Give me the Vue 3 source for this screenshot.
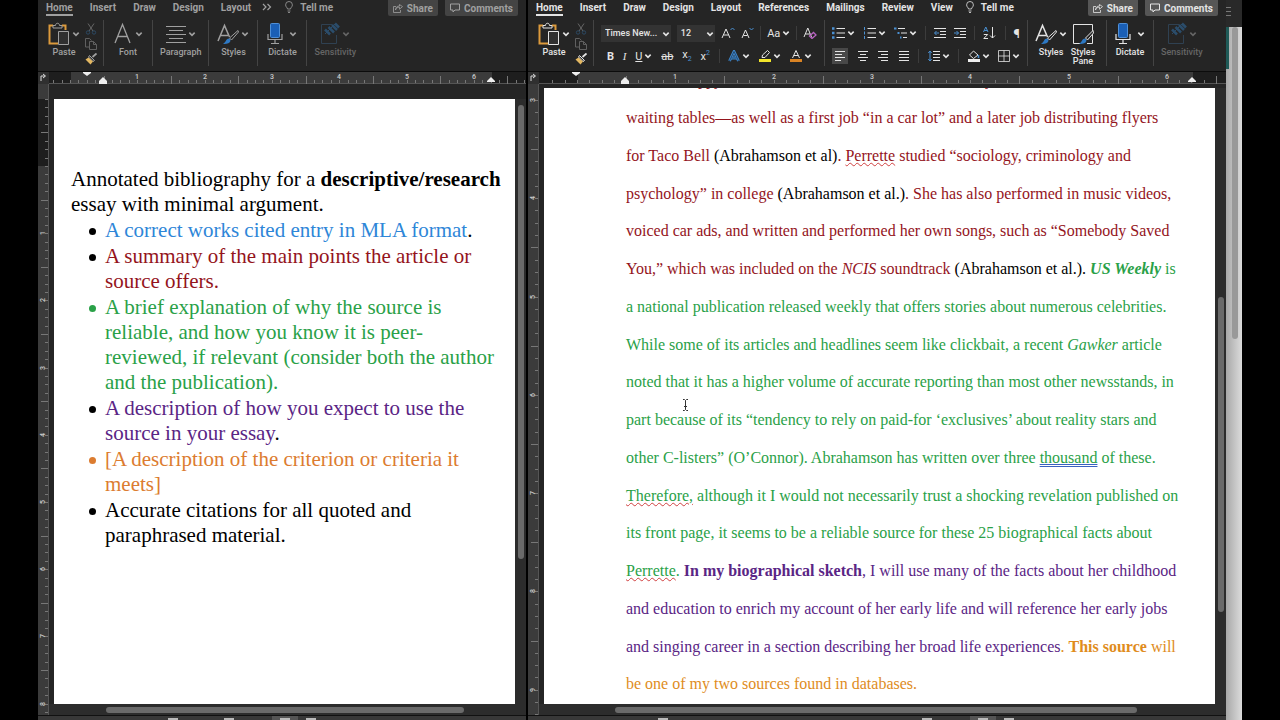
<script setup>
import { ref } from 'vue'

const fontName = ref('Times New...')
const fontSize = ref('12')

const windows = [
  {
    id: 'notes',
    tabs: ['Home', 'Insert', 'Draw', 'Design', 'Layout'],
    more: true,
    ruler: { origin: 32, inch: 67.3, end: 453, first: 49, hang: 65 },
    side: { origin: 82, inch: 67.2, start: 82, margin: 15, count: 9 },
    vbar: { before: 1, size: 75, after: 24 },
    hbar: { before: 12, size: 75, after: 13 }
  },
  {
    id: 'essay',
    tabs: ['Home', 'Insert', 'Draw', 'Design', 'Layout', 'References', 'Mailings', 'Review', 'View'],
    more: false,
    ruler: { origin: 49, inch: 98.3, end: 664, first: 48, hang: 97 },
    side: { origin: -279, inch: 98.3, start: 0, margin: 0, count: 10 },
    vbar: { before: 34, size: 51, after: 15 },
    hbar: { before: 11, size: 76, after: 13 }
  }
]

const intro = [
  [['Annotated bibliography for a ', ''], ['descriptive/research', 'bold']],
  [['essay with minimal argument.', '']]
]

const items = [
  { color: 'blue', dot: 'black', lines: ['A correct works cited entry in MLA format'], stop: '.' },
  { color: 'red', dot: 'black', lines: ['A summary of the main points the article or', 'source offers.'] },
  { color: 'green', dot: 'green', lines: ['A brief explanation of why the source is', 'reliable, and how you know it is peer-', 'reviewed, if relevant (consider both the author', 'and the publication).'] },
  { color: 'purple', dot: 'black', lines: ['A description of how you expect to use the', 'source in your essay'], stop: '.' },
  { color: 'orange', dot: 'orange', lines: ['[A description of the criterion or criteria it', 'meets]'] },
  { color: 'black', dot: 'black', lines: ['Accurate citations for all quoted and', 'paraphrased material.'] }
]

// each line is a list of [text, classes]
const essay = [
  [['work, unhappy as it made her, then landed on other odd jobs, as a clerk, a maid,', 'red']],
  [['waiting tables—as well as a first job “in a car lot” and a later job distributing flyers', 'red']],
  [['for Taco Bell ', 'red'], ['(Abrahamson et al)', 'black'], ['. ', 'red'], ['Perrette', 'red wavy'], [' studied “sociology, criminology and', 'red']],
  [['psychology” in college ', 'red'], ['(Abrahamson et al.)', 'black'], ['. She has also performed in music videos,', 'red']],
  [['voiced car ads, and written and performed her own songs, such as “Somebody Saved', 'red']],
  [['You,” which was included on the ', 'red'], ['NCIS', 'red italic'], [' soundtrack ', 'red'], ['(Abrahamson et al.).', 'black'], [' ', ''], ['US Weekly', 'green bold italic'], [' is', 'green']],
  [['a national publication released weekly that offers stories about numerous celebrities.', 'green']],
  [['While some of its articles and headlines seem like clickbait, a recent ', 'green'], ['Gawker', 'green italic'], [' article', 'green']],
  [['noted that it has a higher volume of accurate reporting than most other newsstands, in', 'green']],
  [['part because of its “tendency to rely on paid-for ‘exclusives’ about reality stars and', 'green']],
  [['other C-listers” (O’Connor). Abrahamson has written over three ', 'green'], ['thousand', 'green double'], [' of these.', 'green']],
  [['Therefore,', 'green wavy'], [' although it I would not necessarily trust a shocking revelation published on', 'green']],
  [['its front page, it seems to be a reliable source for these 25 biographical facts about', 'green']],
  [['Perrette', 'green wavy'], ['. ', 'green'], ['In my biographical sketch', 'purple bold'], [', I will use many of the facts about her childhood', 'purple']],
  [['and education to enrich my account of her early life and will reference her early jobs', 'purple']],
  [['and singing career in a section describing her broad life experiences', 'purple'], ['. ', 'amber'], ['This source', 'amber bold'], [' will', 'amber']],
  [['be one of my two sources found in databases.', 'amber']]
]

function ticks(origin, inch, count) {
  const list = []
  for (let i = -8; i < count * 8; i++) {
    list.push({
      pos: Math.round(origin + (i * inch) / 8),
      half: i % 8 !== 0 && i % 4 === 0,
      label: i > 0 && i % 8 === 0 ? i / 8 : null
    })
  }
  return list.filter((t) => t.pos > 12)
}
</script>

<template>
  <svg class="symbols" aria-hidden="true">
    <symbol id="chev" viewBox="0 0 6 6"><path d="M1 2l2 2 2-2" fill="none" stroke="currentColor" stroke-width="1.2" /></symbol>
    <symbol id="paste" viewBox="0 0 22 24">
      <path d="M5 3.500H1.500V21.500H10" fill="none" stroke="#dc9a3c" stroke-width="2" />
      <path d="M14 3.500H17.500V8" fill="none" stroke="#dc9a3c" stroke-width="2" />
      <path d="M5 6V3.500H7.500C7.500 .5 11.500.5 11.500 3.500H14V6Z" fill="#252525" stroke="currentColor" />
      <path d="M10.500 9.500H20.500V22.500H10.500Z" fill="#303030" stroke="currentColor" />
    </symbol>
    <symbol id="cut" viewBox="0 0 12 12">
      <path d="M3 0.500L8 8M9 .5L4 8" stroke="#666" fill="none" />
      <circle cx="3" cy="9.500" r="1.700" fill="none" stroke="#2c4963" /><circle cx="9" cy="9.500" r="1.700" fill="none" stroke="#2c4963" />
    </symbol>
    <symbol id="copy" viewBox="0 0 12 12">
      <path d="M4 9H.5V.5H4.500L6.500 2.500" fill="none" stroke="#606060" />
      <path d="M4.500 3.500H8.500L11.500 6.500V11.500H4.500ZM8.500 3.500V6.500H11.500" fill="none" stroke="#606060" />
    </symbol>
    <symbol id="brush" viewBox="0 0 12 12">
      <path d="M11.500 .5L7.500 4" stroke="currentColor" stroke-width="1.800" />
      <path d="M4.500 2.500L9.500 7.500L8 8.500L3.500 4Z" fill="#353535" stroke="currentColor" />
      <path d="M3.500 4.500L8 8.500L5.500 11.500L.5 6.500Z" fill="#e3b862" />
    </symbol>
    <symbol id="font" viewBox="0 0 20 24"><path d="M2 21L9.500 2.500L17 21M5 14.500H14" fill="none" stroke="currentColor" stroke-width="1.300" /></symbol>
    <symbol id="para" viewBox="0 0 20 24"><path d="M0 4.500H20M3 8.500H17M0 12.500H20M3 16.500H17M0 20.500H20" stroke="currentColor" /></symbol>
    <symbol id="styles" viewBox="0 0 22 24">
      <path d="M1 19L7.500 3.500L12.500 15M3.500 13.500H11" fill="none" stroke="currentColor" stroke-width="1.500" />
      <path d="M21 8.500L12.500 16L14.500 18L21.500 10Z" fill="#252525" stroke="currentColor" />
      <path d="M6 22C9 20.500 8.500 17 12 16.500C14.500 17.500 14.500 22.500 6 22Z" fill="#2e79c4" />
    </symbol>
    <symbol id="pane" viewBox="0 0 22 24">
      <path d="M8 21.500H1.500V2.500H20.500V21.500H15" fill="none" stroke="currentColor" />
      <path d="M21 8.500L13.500 16L15.500 18L21.500 11Z" fill="#252525" stroke="currentColor" />
      <path d="M7 22C10 20.500 9.500 17 13 16.500C15.500 17.500 15.500 22.500 7 22Z" fill="#2e79c4" />
    </symbol>
    <symbol id="mic" viewBox="0 0 16 24">
      <path d="M1 12V17.500H15V12M8 17.500V21.500M4 21.500H12" fill="none" stroke="currentColor" stroke-width="1.200" />
      <rect x="3.500" y="1.500" width="9" height="14" rx="1" fill="#1a5fb6" stroke="#4f8fd6" />
    </symbol>
    <symbol id="label" viewBox="0 0 20 24">
      <path d="M12 2.500H1.500V21.500H16.500V13" fill="none" stroke="#2f4152" />
      <path d="M5 7.500L10 12.500M8.500 5L14 10.500M12 3L17 8M15 1.500L19 5.500" stroke="#2b4d6b" stroke-width="2.500" />
      <path d="M5 12L15 2" stroke="#2b4d6b" />
    </symbol>
    <symbol id="bulb" viewBox="0 0 8 12"><path d="M2.500 8C2.500 6.500.6 6 .6 3.900A3.400 3.400 0 0 1 7.400 3.900C7.400 6 5.500 6.500 5.500 8ZM2.500 10H5.500M3 11.500H5" fill="none" stroke="currentColor" stroke-width=".8" /></symbol>
    <symbol id="share" viewBox="0 0 10 9"><path d="M3 2.500H.5V8.500H7.500V6M2.500 6C3 4 4.500 3.200 6.500 3.200V5.200L9.500 2.600L6.500 .5V2C4 2 2.500 3.500 2.500 6Z" fill="none" stroke="currentColor" stroke-width=".8" /></symbol>
    <symbol id="comment" viewBox="0 0 10 10"><path d="M.5 1H9.500V7H5L3 9V7H.5Z" fill="none" stroke="currentColor" /></symbol>
    <symbol id="list" viewBox="0 0 13 12">
      <path d="M4.500 1.500H13M4.500 6H13M4.500 10.500H13" stroke="currentColor" />
      <path d="M0 1.500H2.500M0 6H2.500M0 10.500H2.500" stroke="#4a90d2" stroke-width="2.400" />
    </symbol>
    <symbol id="numbers" viewBox="0 0 13 12">
      <path d="M4.500 1.500H13M4.500 6H13M4.500 10.500H13" stroke="currentColor" />
      <path d="M1.500 0V3M1.500 4.500V7.500M1.500 9V12" stroke="#4a90d2" />
    </symbol>
    <symbol id="multi" viewBox="0 0 13 12">
      <path d="M4 1.500H11M7 6H13M9 10.500H13" stroke="currentColor" />
      <path d="M0 1.500H2.500M3.500 6H5.500M6 10.500H7.500" stroke="#4a90d2" stroke-width="2" />
    </symbol>
    <symbol id="outdent" viewBox="0 0 12 12">
      <path d="M0 1.500H12M6 4.500H12M6 7.500H12M0 10.500H12" stroke="currentColor" />
      <path d="M5 6H.8M2.500 4L.5 6L2.500 8" fill="none" stroke="#4a90d2" />
    </symbol>
    <symbol id="indent" viewBox="0 0 12 12">
      <path d="M0 1.500H12M6 4.500H12M6 7.500H12M0 10.500H12" stroke="currentColor" />
      <path d="M0 6H4.500M2.500 4L4.500 6L2.500 8" fill="none" stroke="#4a90d2" />
    </symbol>
    <symbol id="sort" viewBox="0 0 13 12">
      <path d="M.5 5L2.800 0L5 5M1.300 3.500H4.300" fill="none" stroke="#4a90d2" />
      <path d="M.8 7.500H4.700L.8 11.500H5M9.500 0V11M7 8.500L9.500 11L12 8.500" fill="none" stroke="currentColor" />
    </symbol>
    <symbol id="left" viewBox="0 0 12 12"><path d="M1 1.500H11M1 4.500H8M1 7.500H11M1 10.500H7" stroke="currentColor" /></symbol>
    <symbol id="center" viewBox="0 0 12 12"><path d="M1 1.500H11M3 4.500H9M1 7.500H11M3 10.500H9" stroke="currentColor" /></symbol>
    <symbol id="right" viewBox="0 0 12 12"><path d="M1 1.500H11M4 4.500H11M1 7.500H11M4 10.500H11" stroke="currentColor" /></symbol>
    <symbol id="justify" viewBox="0 0 12 12"><path d="M1 1.500H11M1 4.500H11M1 7.500H11M1 10.500H11" stroke="currentColor" /></symbol>
    <symbol id="spacing" viewBox="0 0 12 12">
      <path d="M5 1.500H12M5 4.500H12M5 7.500H12M5 10.500H12" stroke="currentColor" />
      <path d="M2 1V11M.3 3L2 1L3.700 3M.3 9L2 11L3.700 9" fill="none" stroke="#4a90d2" />
    </symbol>
    <symbol id="fill" viewBox="0 0 12 12">
      <path d="M5.500 1L10 5L5.500 8.500L1.500 5Z" fill="none" stroke="currentColor" /><path d="M10.500 5V8" stroke="#4a90d2" stroke-width="1.500" />
      <path d="M0 10.500H12" stroke="#eee" stroke-width="3" />
    </symbol>
    <symbol id="borders" viewBox="0 0 12 12"><path d="M.5 .5H11.500V11.500H.5ZM6 .5V11.500M.5 6H11.500" fill="none" stroke="currentColor" stroke-width=".8" /></symbol>
    <symbol id="grow" viewBox="0 0 14 12"><path d="M1 11L5 2L9 11M2.500 8H7.500" fill="none" stroke="currentColor" /><path d="M9.500 3L11.500 1L13.500 3" fill="none" stroke="#4a90d2" /></symbol>
    <symbol id="shrink" viewBox="0 0 14 12"><path d="M2 11L5.500 3L9 11M3.500 8.500H7.500" fill="none" stroke="currentColor" /><path d="M9.500 1L11.500 3L13.500 1" fill="none" stroke="#4a90d2" /></symbol>
    <symbol id="clear" viewBox="0 0 14 12"><path d="M1 10L4.800 1L8.500 10M2.500 7H7" fill="none" stroke="currentColor" /><path d="M6.500 9L10.500 5.500L13 8L9 11.500Z" fill="none" stroke="#b763c0" stroke-width="1.300" /></symbol>
    <symbol id="effects" viewBox="0 0 12 12"><path d="M1.500 11L6 1.500L10.500 11M3.500 8H8.500" fill="none" stroke="#3f86c9" stroke-width="2.800" /><path d="M1.500 11L6 1.500L10.500 11M3.500 8H8.500" fill="none" stroke="#1d3f63" stroke-width=".8" /></symbol>
    <symbol id="marker" viewBox="0 0 12 12"><path d="M3 7.500L3.500 5L8.500 .5L10.500 2.500L6 7.500Z" fill="none" stroke="currentColor" /><path d="M0 10.500H12" stroke="#f2e52b" stroke-width="3" /></symbol>
    <symbol id="color" viewBox="0 0 12 12"><path d="M2.500 8L6 .5L9.500 8M4 5.500H8" fill="none" stroke="currentColor" /><path d="M0 10.500H12" stroke="#d98324" stroke-width="3" /></symbol>
  </svg>

  <main class="desktop">
    <section v-for="w in windows" :key="w.id" class="window" :class="w.id">
      <nav class="tabs">
        <button v-for="(tab, i) in w.tabs" :key="tab" class="tab" :class="{ active: i === 0 }">{{ tab }}</button>
        <button v-if="w.more" class="tab more" aria-label="More tabs">
          <svg width="10" height="8" viewBox="0 0 10 8"><path d="M1 1L4 4L1 7M5.500 1L8.500 4L5.500 7" fill="none" stroke="currentColor" stroke-width="1.200" /></svg>
        </button>
        <button class="tab tell"><svg width="8" height="12"><use href="#bulb" /></svg>Tell me</button>
        <span class="grow"></span>
        <button class="pill"><svg width="10" height="9"><use href="#share" /></svg>Share</button>
        <button class="pill"><svg width="10" height="10"><use href="#comment" /></svg>Comments</button>
      </nav>

      <div class="ribbon">
        <div class="group clip">
          <button class="cmd"><span class="pic"><svg width="22" height="24"><use href="#paste" /></svg><svg width="8" height="8"><use href="#chev" /></svg></span>Paste</button>
          <div class="stack">
            <button aria-label="Cut"><svg width="12" height="12"><use href="#cut" /></svg></button>
            <button aria-label="Copy"><svg width="12" height="12"><use href="#copy" /></svg></button>
            <button aria-label="Format painter"><svg width="12" height="12"><use href="#brush" /></svg></button>
          </div>
        </div>

        <template v-if="w.id === 'notes'">
          <div class="group">
            <button class="cmd"><span class="pic"><svg width="20" height="24"><use href="#font" /></svg><svg width="8" height="8"><use href="#chev" /></svg></span>Font</button>
          </div>
          <div class="group">
            <button class="cmd"><span class="pic"><svg width="20" height="24"><use href="#para" /></svg><svg width="8" height="8"><use href="#chev" /></svg></span>Paragraph</button>
          </div>
        </template>

        <template v-else>
          <div class="group tools fonts">
            <div class="row">
              <span class="pick name">
                <select v-model="fontName" aria-label="Font"><option>Times New...</option><option>Palatino</option></select>
                <svg width="8" height="8"><use href="#chev" /></svg>
              </span>
              <span class="pick size">
                <select v-model="fontSize" aria-label="Font size"><option>12</option><option>14</option></select>
                <svg width="8" height="8"><use href="#chev" /></svg>
              </span>
              <button aria-label="Grow font"><svg width="14" height="12"><use href="#grow" /></svg></button>
              <button aria-label="Shrink font"><svg width="14" height="12"><use href="#shrink" /></svg></button>
              <i class="sep"></i>
              <button>Aa<svg width="8" height="8"><use href="#chev" /></svg></button>
              <i class="sep"></i>
              <button aria-label="Clear formatting"><svg width="14" height="12"><use href="#clear" /></svg></button>
            </div>
            <div class="row low">
              <button class="b">B</button>
              <button class="i">I</button>
              <button><span class="u">U</span><svg width="8" height="8"><use href="#chev" /></svg></button>
              <button class="s">ab</button>
              <button class="x">x<sub>2</sub></button>
              <button class="x">x<sup>2</sup></button>
              <i class="sep"></i>
              <button aria-label="Text effects"><svg width="12" height="12"><use href="#effects" /></svg><svg width="8" height="8"><use href="#chev" /></svg></button>
              <button aria-label="Highlight"><svg width="12" height="12"><use href="#marker" /></svg><svg width="8" height="8"><use href="#chev" /></svg></button>
              <button aria-label="Font color"><svg width="12" height="12"><use href="#color" /></svg><svg width="8" height="8"><use href="#chev" /></svg></button>
            </div>
          </div>
          <div class="group tools paras">
            <div class="row">
              <button aria-label="Bullets"><svg width="13" height="12"><use href="#list" /></svg><svg width="8" height="8"><use href="#chev" /></svg></button>
              <button aria-label="Numbering"><svg width="13" height="12"><use href="#numbers" /></svg><svg width="8" height="8"><use href="#chev" /></svg></button>
              <button aria-label="Multilevel list"><svg width="13" height="12"><use href="#multi" /></svg><svg width="8" height="8"><use href="#chev" /></svg></button>
              <i class="sep"></i>
              <button aria-label="Decrease indent"><svg width="12" height="12"><use href="#outdent" /></svg></button>
              <button aria-label="Increase indent"><svg width="12" height="12"><use href="#indent" /></svg></button>
              <i class="sep"></i>
              <button aria-label="Sort"><svg width="13" height="12"><use href="#sort" /></svg></button>
              <i class="sep"></i>
              <button class="pilcrow">¶</button>
            </div>
            <div class="row">
              <button class="on" aria-label="Align left"><svg width="12" height="12"><use href="#left" /></svg></button>
              <button aria-label="Center"><svg width="12" height="12"><use href="#center" /></svg></button>
              <button aria-label="Align right"><svg width="12" height="12"><use href="#right" /></svg></button>
              <button aria-label="Justify"><svg width="12" height="12"><use href="#justify" /></svg></button>
              <i class="sep"></i>
              <button aria-label="Line spacing"><svg width="12" height="12"><use href="#spacing" /></svg><svg width="8" height="8"><use href="#chev" /></svg></button>
              <i class="sep"></i>
              <button aria-label="Shading"><svg width="12" height="12"><use href="#fill" /></svg><svg width="8" height="8"><use href="#chev" /></svg></button>
              <button aria-label="Borders"><svg width="12" height="12"><use href="#borders" /></svg><svg width="8" height="8"><use href="#chev" /></svg></button>
            </div>
          </div>
        </template>

        <div class="group">
          <button class="cmd"><span class="pic"><svg width="22" height="24"><use href="#styles" /></svg><svg width="8" height="8"><use href="#chev" /></svg></span>Styles</button>
          <button v-if="w.id === 'essay'" class="cmd"><span class="pic"><svg width="22" height="24"><use href="#pane" /></svg></span>Styles<br>Pane</button>
        </div>
        <div class="group">
          <button class="cmd"><span class="pic mic"><svg width="16" height="24"><use href="#mic" /></svg><svg width="8" height="8"><use href="#chev" /></svg></span>Dictate</button>
        </div>
        <div class="group last">
          <button class="cmd" disabled><span class="pic"><svg width="20" height="24"><use href="#label" /></svg><svg width="8" height="8"><use href="#chev" /></svg></span>Sensitivity</button>
        </div>
      </div>

      <svg class="ruler" width="100%" height="12">
        <rect width="100%" height="12" fill="#1e1e1e" />
        <rect :x="w.ruler.origin + 1" :width="w.ruler.end - w.ruler.origin" height="12" fill="#3b3b3b" />
        <rect x="11" y="11" width="100%" height="1" fill="#555" />
        <template v-for="t in ticks(w.ruler.origin, w.ruler.inch, 7)" :key="t.pos">
          <rect :x="t.pos" :y="t.half ? 4 : 8" width="1" :height="t.half ? 8 : 3" fill="#777" />
          <text v-if="t.label" :x="t.pos" y="7" class="num">{{ t.label }}</text>
        </template>
        <rect width="11" height="12" fill="#303030" />
        <path d="M3 9V4H7M5 2L7.500 4L5 6" fill="none" stroke="#ddd" />
        <path :transform="`translate(${w.ruler.first} 0)`" d="M-4 0H4V1L0 4L-4 1Z" fill="#eee" />
        <path :transform="`translate(${w.ruler.hang} 0)`" d="M-4 9L0 5L4 9V12H-4Z" fill="#eee" />
        <path :transform="`translate(${w.ruler.end} 0)`" d="M-4 10V9L0 5L4 9V10Z" fill="#eee" />
      </svg>

      <div class="body">
        <svg class="side" width="11" height="100%">
          <rect width="11" height="100%" fill="#3b3b3b" />
          <rect v-if="w.side.start" :y="w.side.margin" width="11" :height="w.side.start - w.side.margin" fill="#1e1e1e" />
          <rect x="10" width="1" height="100%" fill="#555" />
          <template v-for="t in ticks(w.side.origin, w.side.inch, w.side.count)" :key="t.pos">
            <rect :x="t.half ? 3 : 7" :y="t.pos" :width="t.half ? 7 : 3" height="1" fill="#777" />
            <text v-if="t.label" :transform="`translate(7 ${t.pos}) rotate(-90)`" class="num">{{ t.label }}</text>
          </template>
        </svg>

        <div class="view">
          <div class="canvas">
            <article v-if="w.id === 'notes'" class="page">
              <p>
                <span v-for="(line, i) in intro" :key="i" class="line"><span v-for="(run, j) in line" :key="j" :class="run[1]">{{ run[0] }}</span></span>
              </p>
              <ul>
                <li v-for="item in items" :key="item.lines[0]" :class="item.dot">
                  <span v-for="(line, i) in item.lines" :key="line" class="line"><span :class="item.color">{{ line }}</span><span v-if="item.stop && i === item.lines.length - 1" class="black">{{ item.stop }}</span></span>
                </li>
              </ul>
            </article>
            <article v-else class="page">
              <p>
                <span v-for="(line, i) in essay" :key="i" class="line"><span v-for="(run, j) in line" :key="j" :class="run[1]">{{ run[0] }}</span></span>
              </p>
              <svg class="caret" width="7" height="12" viewBox="0 0 7 12"><path d="M1 .5H2.500L3.500 1.500L4.500 .5H6M3.500 1.500V10.500M1 11.500H2.500L3.500 10.500L4.500 11.500H6M2 7.500H5" fill="none" stroke="#333" /></svg>
            </article>
            <div class="vbar">
              <span :style="{ flexGrow: w.vbar.before }"></span>
              <span class="thumb" :style="{ flexGrow: w.vbar.size }"></span>
              <span :style="{ flexGrow: w.vbar.after }"></span>
            </div>
          </div>
          <div class="hbar">
            <span :style="{ flexGrow: w.hbar.before }"></span>
            <span class="thumb" :style="{ flexGrow: w.hbar.size }"></span>
            <span :style="{ flexGrow: w.hbar.after }"></span>
          </div>
        </div>
      </div>

      <footer class="status">
        <i class="chip"></i>
        <i class="chip mid"></i>
        <i class="chip current"></i>
        <i class="chip"></i>
      </footer>
    </section>

    <aside class="behind">
      <div class="cap"><i></i><i></i><i></i></div>
      <div class="rail"><span class="teal"></span><span class="knob"></span></div>
    </aside>
  </main>
</template>

<style>
body {
  margin: 0;
  background: #000;
}
</style>

<style scoped>
.symbols {
  display: none;
}
.desktop {
  display: flex;
  height: 100vh;
  box-sizing: border-box;
  padding: 0 38px;
  background: #000;
  overflow: hidden;
  font-family: Roboto, "Liberation Sans", sans-serif;
  font-size: 9px;
}
svg {
  display: block;
  flex: none;
}
button {
  display: flex;
  align-items: center;
  padding: 0;
  border: 0;
  background: none;
  color: inherit;
  font: inherit;
  white-space: nowrap;
}
.window {
  display: flex;
  flex-direction: column;
  min-width: 0;
  background: #252525;
  overflow: hidden;
}
.notes {
  flex: 488 1 0;
  color: #a0a0a0;
  margin-right: 2px;
}
.essay {
  flex: 698 1 0;
  color: #e4e4e4;
}

/* tabs */
.tabs {
  display: flex;
  align-items: flex-start;
  height: 17px;
  padding: 0 8px;
  gap: 17px;
  font-size: 10px;
  font-weight: 700;
}
.tab {
  height: 16px;
  box-sizing: border-box;
  border-bottom: 2px solid transparent;
}
.tab.active {
  border-bottom-color: currentColor;
}
.tell {
  gap: 7px;
  margin-left: -4px;
}
.more {
  margin-left: -6px;
}
.grow {
  flex: 1;
}
.pill {
  height: 16px;
  padding: 0 5px;
  gap: 4px;
  border-radius: 0 0 2px 2px;
  background: #444;
}
.pill + .pill {
  margin-left: -10px;
}
.essay .pill {
  background: #565656;
}

/* ribbon */
.ribbon {
  display: flex;
  height: 54px;
  border-bottom: 1px solid #0c0c0c;
}
.group {
  display: flex;
  align-items: flex-start;
  margin: 3px 0 5px;
  padding: 0 7px;
  border-right: 1px solid #444;
}
.group.last {
  border: 0;
}
.clip {
  padding: 0 6px 0 9px;
}
.cmd {
  flex-direction: column;
  min-width: 34px;
  font-weight: 500;
  line-height: 9px;
}
.essay .cmd {
  min-width: 32px;
}
.essay .clip .cmd {
  min-width: 34px;
}
.cmd:disabled {
  color: #666;
}
.pic {
  display: flex;
  align-items: center;
  justify-content: center;
  gap: 2px;
  height: 28px;
}
.mic {
  gap: 6px;
}
.stack {
  display: flex;
  flex-direction: column;
  gap: 3px;
  padding: 3px 0 0 4px;
}
.tools {
  flex-direction: column;
  align-items: stretch;
  justify-content: space-between;
}
.fonts {
  width: 216px;
}
.paras {
  width: 188px;
}
.row {
  display: flex;
  align-items: center;
  justify-content: space-between;
  height: 20px;
  font-size: 11px;
}
.row:first-child {
  margin-top: 3px;
}
.row.low {
  padding: 0 5px 0 6px;
}
.row button {
  gap: 2px;
}
.sep {
  width: 1px;
  height: 14px;
  background: #3c3c3c;
}
.on {
  background: #484848;
}
.row .on {
  padding: 2px;
}
.pick {
  position: relative;
  display: flex;
  background: #333;
}
.pick select {
  width: 100%;
  height: 17px;
  padding: 0 4px;
  border: 0;
  background: none;
  color: inherit;
  appearance: none;
  font: 500 9px Roboto, sans-serif;
}
.pick svg {
  position: absolute;
  right: 1px;
  top: 5px;
}
.name {
  width: 70px;
}
.size {
  width: 38px;
}
.b {
  font-weight: 700;
}
.i {
  font-family: "Liberation Serif", serif;
  font-style: italic;
}
.u {
  text-decoration: underline;
}
.s {
  text-decoration: line-through;
}
.row .x {
  display: block;
  line-height: 12px;
}
.x sub,
.x sup {
  color: #4a90d2;
  font-size: 7px;
  line-height: 7px;
}
.pilcrow {
  font-size: 13px;
}

/* rulers */
.num {
  fill: #ccc;
  font-size: 7px;
  font-weight: 500;
  text-anchor: middle;
}
.body {
  display: flex;
  flex: 1;
  min-height: 0;
}
.view {
  display: flex;
  flex-direction: column;
  flex: 1;
  min-width: 0;
}
.canvas {
  display: flex;
  flex: 1;
  min-height: 0;
  box-sizing: border-box;
  padding: 15px 0 0 5px;
}
.essay .canvas {
  padding-top: 4px;
}

/* documents */
.page {
  position: relative;
  flex: 1;
  min-width: 0;
  box-sizing: border-box;
  overflow: hidden;
  background: #fff;
  color: #000;
  font-family: "Liberation Serif", serif;
}
.page p,
.page ul {
  margin: 0;
  padding: 0;
  list-style: none;
}
.line {
  display: block;
  white-space: pre;
}
.notes .page {
  padding: 68px 0 0 17px;
  font-size: 21px;
  line-height: 25px;
}
.page li {
  position: relative;
  margin-top: 1px;
  padding-left: 34px;
}
.page li::before {
  content: "";
  position: absolute;
  left: 18px;
  top: 10px;
  width: 7px;
  height: 7px;
  border-radius: 50%;
  background: currentColor;
}
.essay .page {
  padding-left: 82px;
  font-size: 16px;
  line-height: 38px;
}
.essay .page p {
  margin-top: -27px;
}
.essay .line:nth-child(4n) {
  line-height: 37px;
}
.caret {
  position: absolute;
  left: 138px;
  top: 311px;
}
.black { color: #000; }
.blue { color: #2e86d8; }
.red { color: #94141c; }
.green { color: #2aa148; }
.purple { color: #5a2585; }
.orange { color: #dc7c30; }
.amber { color: #e08c1c; }
.bold { font-weight: 700; }
.italic { font-style: italic; }
.wavy {
  text-decoration: underline wavy #d04040 1px;
}
.double {
  text-decoration: underline double #3a62c0 1px;
}

/* scrollbars */
.vbar {
  display: flex;
  flex-direction: column;
  align-items: center;
  width: 11px;
  background: #2c2c2c;
}
.hbar {
  display: flex;
  align-items: center;
  height: 11px;
  background: #2c2c2c;
}
.thumb {
  border-radius: 3px;
  background: #6a6a6a;
}
.vbar .thumb {
  width: 6px;
}
.hbar .thumb {
  height: 6px;
}
.status {
  display: flex;
  align-items: flex-end;
  gap: 14px;
  height: 4px;
  padding-left: 130px;
  border-top: 1px solid #111;
  background: #383838;
}
.chip {
  width: 10px;
  height: 2px;
  background: #bbb;
}
.mid {
  margin-left: 32px;
}
.essay .mid {
  margin-left: 240px;
}
.current {
  margin: 0 -6px 0 24px;
  border: solid #555;
  border-width: 2px 8px 0;
}

/* window strip peeking out at the right */
.behind {
  display: flex;
  flex-direction: column;
  width: 16px;
  background: #cfcfcf;
}
.cap {
  display: flex;
  flex-direction: column;
  gap: 3px;
  height: 20px;
  padding-top: 7px;
  background: #292929;
}
.cap i {
  width: 5px;
  height: 1px;
  background: #777;
}
.rail {
  display: flex;
  flex: 1;
  gap: 3px;
  background: linear-gradient(90deg, #a8a8a8, #dcdcdc);
}
.teal {
  width: 3px;
  height: 42px;
  background: #1f5a57;
}
.knob {
  width: 6px;
  height: 45%;
  border-radius: 3px;
  background: #999;
}
</style>
